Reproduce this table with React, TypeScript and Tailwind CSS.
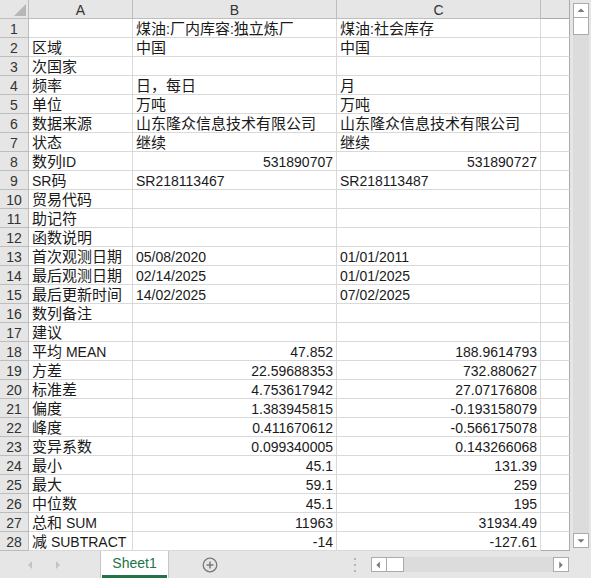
import React from "react";

type Cell = { text: string; right?: boolean };

interface SheetRow {
  a: string;
  b?: Cell;
  c?: Cell;
}

const L = (text: string): Cell => ({ text });
const R = (text: string): Cell => ({ text, right: true });

const rows: SheetRow[] = [
  { a: "", b: L("煤油:厂内库容:独立炼厂"), c: L("煤油:社会库存") },
  { a: "区域", b: L("中国"), c: L("中国") },
  { a: "次国家" },
  { a: "频率", b: L("日，每日"), c: L("月") },
  { a: "单位", b: L("万吨"), c: L("万吨") },
  { a: "数据来源", b: L("山东隆众信息技术有限公司"), c: L("山东隆众信息技术有限公司") },
  { a: "状态", b: L("继续"), c: L("继续") },
  { a: "数列ID", b: R("531890707"), c: R("531890727") },
  { a: "SR码", b: L("SR218113467"), c: L("SR218113487") },
  { a: "贸易代码" },
  { a: "助记符" },
  { a: "函数说明" },
  { a: "首次观测日期", b: L("05/08/2020"), c: L("01/01/2011") },
  { a: "最后观测日期", b: L("02/14/2025"), c: L("01/01/2025") },
  { a: "最后更新时间", b: L("14/02/2025"), c: L("07/02/2025") },
  { a: "数列备注" },
  { a: "建议" },
  { a: "平均 MEAN", b: R("47.852"), c: R("188.9614793") },
  { a: "方差", b: R("22.59688353"), c: R("732.880627") },
  { a: "标准差", b: R("4.753617942"), c: R("27.07176808") },
  { a: "偏度", b: R("1.383945815"), c: R("-0.193158079") },
  { a: "峰度", b: R("0.411670612"), c: R("-0.566175078") },
  { a: "变异系数", b: R("0.099340005"), c: R("0.143266068") },
  { a: "最小", b: R("45.1"), c: R("131.39") },
  { a: "最大", b: R("59.1"), c: R("259") },
  { a: "中位数", b: R("45.1"), c: R("195") },
  { a: "总和 SUM", b: R("11963"), c: R("31934.49") },
  { a: "减 SUBTRACT", b: R("-14"), c: R("-127.61") },
];

// CJK glyphs render a bit larger than the latin text in the original
function Mixed({ text }: { text: string }) {
  const parts = text.split(/([\u3000-\u9fff\uff00-\uffef]+)/).filter(Boolean);
  return (
    <>
      {parts.map((p, i) =>
        /[\u3000-\u9fff\uff00-\uffef]/.test(p) ? (
          <span key={i} className="text-[15px]">
            {p}
          </span>
        ) : (
          <span key={i}>{p}</span>
        ),
      )}
    </>
  );
}

function DataCell({ cell, width }: { cell?: Cell; width: string }) {
  return (
    <div
      className={`${width} h-[19px] shrink-0 overflow-visible whitespace-nowrap border-r border-b border-[#d9d9d9] px-[3px] pt-[1px] leading-[18px] ${
        cell?.right ? "text-right" : "text-left"
      }`}
    >
      {cell ? <Mixed text={cell.text} /> : null}
    </div>
  );
}

function ArrowBox({ dir }: { dir: "up" | "down" | "left" | "right" }) {
  const points = {
    up: "4,9 8,5 12,9",
    down: "4,6 8,10 12,6",
    left: "9,4 5,8 9,12",
    right: "6,4 10,8 6,12",
  }[dir];
  return (
    <div className="flex h-[15px] w-[16px] shrink-0 items-center justify-center border border-[#ababab] bg-white">
      <svg width="16" height="16" viewBox="0 0 16 16">
        <polygon points={points} fill="#7a7a7a" />
      </svg>
    </div>
  );
}

export default function App() {
  return (
    <div
      className="flex h-[578px] w-[591px] flex-col overflow-hidden bg-white text-[14px] text-[#1a1a1a]"
      style={{ fontFamily: '"Liberation Sans", "Noto Sans CJK SC", sans-serif' }}
    >
      <div className="flex h-[551px] shrink-0">
        {/* grid */}
        <div className="flex w-[570px] shrink-0 flex-col">
          <div className="flex h-[19px] shrink-0 bg-[#e6e6e6] text-[#333]">
            <div className="flex h-[19px] w-[29px] shrink-0 items-end justify-end border-r border-b border-[#bdbdbd] p-[2px]">
              <svg width="12" height="12" viewBox="0 0 12 12">
                <polygon points="12,0 12,12 0,12" fill="#b7b7b7" />
              </svg>
            </div>
            <div className="h-[19px] w-[104px] shrink-0 border-r border-b border-[#bdbdbd] pt-[1px] text-center leading-[18px]">A</div>
            <div className="h-[19px] w-[204px] shrink-0 border-r border-b border-[#bdbdbd] pt-[1px] text-center leading-[18px]">B</div>
            <div className="h-[19px] w-[204px] shrink-0 border-r border-b border-[#bdbdbd] pt-[1px] text-center leading-[18px]">C</div>
            <div className="h-[19px] w-[29px] shrink-0 border-r border-b border-[#ababab]" />
          </div>
          {rows.map((row, i) => (
            <div key={i} className="flex h-[19px] shrink-0">
              <div className="h-[19px] w-[29px] shrink-0 border-r border-b border-[#bdbdbd] bg-[#e6e6e6] pt-[1px] text-center leading-[18px] text-[#333]">
                {i + 1}
              </div>
              <DataCell cell={row.a ? L(row.a) : undefined} width="w-[104px]" />
              <DataCell cell={row.b} width="w-[204px]" />
              <DataCell cell={row.c} width="w-[204px]" />
              <div
                className={`h-[19px] w-[29px] shrink-0 border-r border-[#ababab] ${
                  i === rows.length - 1 ? "border-b border-b-[#ababab]" : "border-b border-b-[#d9d9d9]"
                }`}
              />
            </div>
          ))}
        </div>
        {/* vertical scrollbar */}
        <div className="flex w-[21px] shrink-0 flex-col items-center bg-[#e6e6e6] pt-[3px] pb-[3px]">
          <ArrowBox dir="up" />
          <div className="h-[17px] w-[16px] shrink-0 border border-t-0 border-[#ababab] bg-white" />
          <div className="w-[16px] flex-1 bg-[#dcdcdc]" />
          <ArrowBox dir="down" />
        </div>
      </div>

      {/* sheet tabs */}
      <div className="flex h-[27px] shrink-0 items-stretch bg-[#e6e6e6]">
        <div className="flex w-[100px] shrink-0 items-center gap-[20px] pl-[26px]">
          <svg width="8" height="10" viewBox="0 0 8 10">
            <polygon points="6,1 2,5 6,9" fill="#c4c4c4" />
          </svg>
          <svg width="8" height="10" viewBox="0 0 8 10">
            <polygon points="2,1 6,5 2,9" fill="#c4c4c4" />
          </svg>
        </div>
        <div className="flex w-[69px] shrink-0 flex-col border-l border-r border-[#c6c6c6] bg-white">
          <div className="flex-1 pt-[2px] text-center leading-[20px] text-[#217346]">Sheet1</div>
          <div className="mx-[1px] h-[3px] bg-[#217346]" />
        </div>
        <div className="flex w-[84px] shrink-0 items-center pl-[33px]">
          <svg width="16" height="16" viewBox="0 0 16 16">
            <circle cx="8" cy="8" r="6.8" fill="none" stroke="#7a7a7a" strokeWidth="1.3" />
            <path d="M8 4.5v7M4.5 8h7" stroke="#7a7a7a" strokeWidth="1.5" />
          </svg>
        </div>
        <div className="flex flex-1 items-center pl-[101px]">
          <div className="flex h-[14px] w-[3px] flex-col justify-between">
            <div className="h-[2px] w-[2px] bg-[#b5b5b5]" />
            <div className="h-[2px] w-[2px] bg-[#b5b5b5]" />
            <div className="h-[2px] w-[2px] bg-[#b5b5b5]" />
          </div>
          <div className="ml-[14px] flex h-[15px] w-[198px] items-stretch">
            <ArrowBox dir="left" />
            <div className="w-[17px] shrink-0 border border-l-0 border-[#ababab] bg-white" />
            <div className="flex-1 bg-[#dcdcdc]" />
            <ArrowBox dir="right" />
          </div>
        </div>
      </div>
    </div>
  );
}
